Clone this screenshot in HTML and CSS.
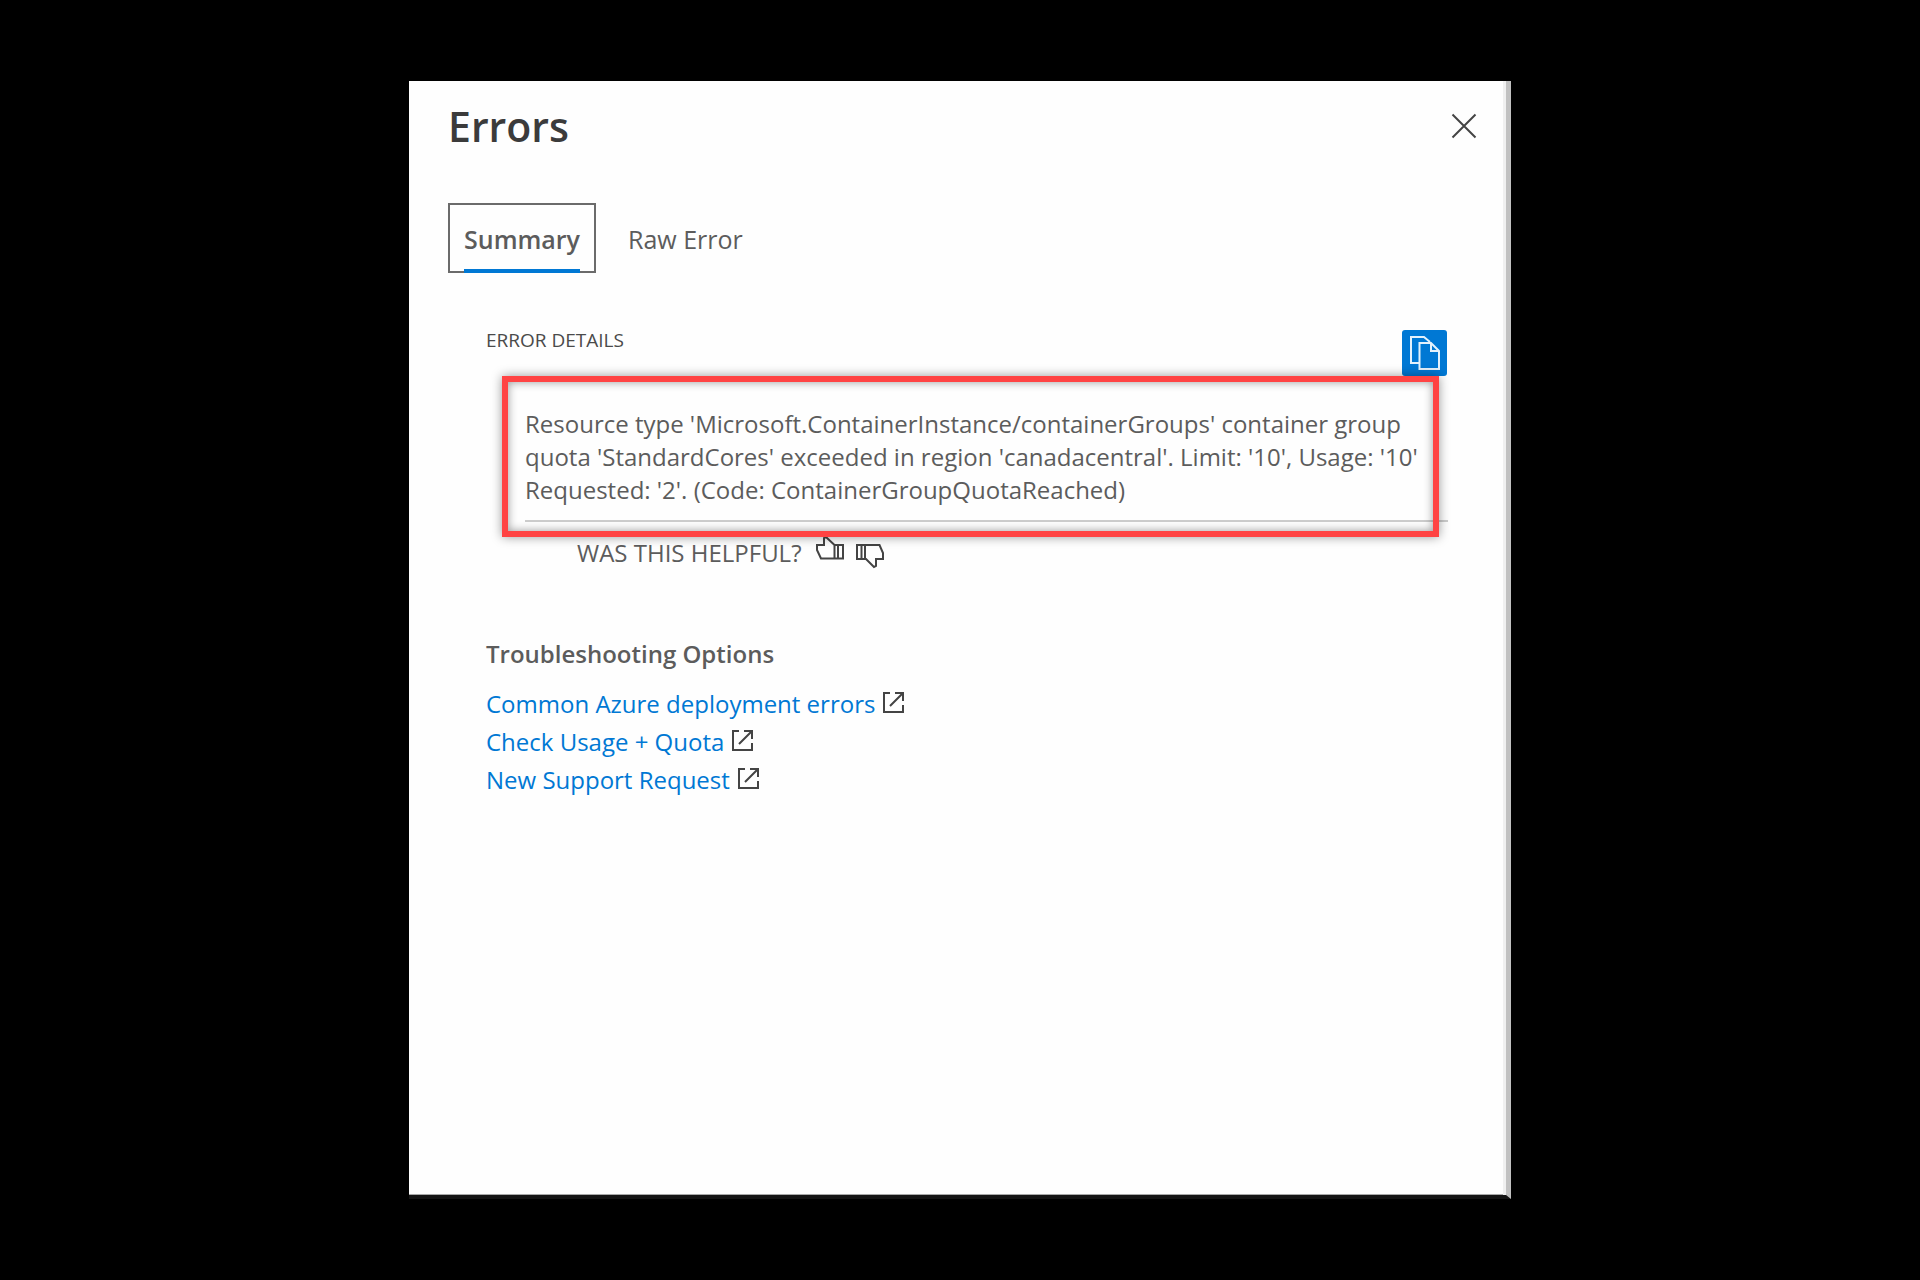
FILE: index.html
```html
<!DOCTYPE html>
<html lang="en">
  <head>
    <meta charset="UTF-8" />
    <meta name="viewport" content="width=device-width, initial-scale=1.0" />
    <title>Errors</title>
    <link rel="stylesheet" href="styles.css">
  </head>

  <body>
    <main class="panel">
      <header class="panel-header">
        <h1>Errors</h1>
        <button class="close-button" type="button" aria-label="Close">
          <svg width="26" height="26" viewBox="0 0 26 26">
            <path d="M1.500 1.500L24.500 24.500M24.500 1.500L1.500 24.500" />
          </svg>
        </button>
      </header>

      <div class="tabs" role="tablist">
        <button class="tab active" type="button" role="tab" aria-selected="true">Summary</button>
        <button class="tab" type="button" role="tab" aria-selected="false">Raw Error</button>
      </div>

      <section class="details">
        <div class="details-header">
          <h2>ERROR DETAILS</h2>
          <button class="copy-button" type="button" aria-label="Copy">
            <svg width="30" height="34" viewBox="0 0 30 34">
              <path d="M9 27H1V1H14L20 6" />
              <path d="M9.500 7H21L29 15V33H9.500Z" />
              <path d="M21 7V15H29" />
            </svg>
          </button>
        </div>

        <div class="message">
          <p>Resource type 'Microsoft.ContainerInstance/containerGroups' container group quota 'StandardCores' exceeded in region 'canadacentral'. Limit: '10', Usage: '10' Requested: '2'. (Code: ContainerGroupQuotaReached)</p>
          <div class="highlight"></div>
        </div>

        <div class="helpful">
          <span>WAS THIS HELPFUL?</span>
          <button class="thumb" type="button" aria-label="Yes">
            <svg width="28" height="33" viewBox="0 0 28 33">
              <path d="M5 22.500L1 14V9H8V2L10 1L18.500 9H27V22.500ZM18.500 9V22.500M22 9V22.500" />
            </svg>
          </button>
          <button class="thumb" type="button" aria-label="No">
            <svg width="28" height="33" viewBox="0 0 28 33">
              <path d="M1 9H23.500L27 17V23H20V30L18 31L10 23H1ZM5.500 9V23M9 9V23" />
            </svg>
          </button>
        </div>
      </section>

      <section class="troubleshooting">
        <h3>Troubleshooting Options</h3>
        <ul>
          <li>
            <a href="#">Common Azure deployment errors</a>
            <svg class="external" width="21" height="21" viewBox="0 0 21 21">
              <path d="M7 1H1V20H20V13M12 1H20V9M20 1L7 14" />
            </svg>
          </li>
          <li>
            <a href="#">Check Usage + Quota</a>
            <svg class="external" width="21" height="21" viewBox="0 0 21 21">
              <path d="M7 1H1V20H20V13M12 1H20V9M20 1L7 14" />
            </svg>
          </li>
          <li>
            <a href="#">New Support Request</a>
            <svg class="external" width="21" height="21" viewBox="0 0 21 21">
              <path d="M7 1H1V20H20V13M12 1H20V9M20 1L7 14" />
            </svg>
          </li>
        </ul>
      </section>
    </main>
  </body>
</html>
```

FILE: styles.css
```css
* {
  box-sizing: border-box;
}

body {
  margin: 0;
  min-height: 100vh;
  padding: 81px 0;
  display: flex;
  justify-content: center;
  background-color: #000000;
  font-family: "Open Sans", "Noto Sans", sans-serif;
  font-size: 24px;
  line-height: 33px;
  color: #5c5c5c;
}

h1,
h2,
h3,
p,
ul {
  margin: 0;
  padding: 0;
}

button {
  padding: 0;
  border: none;
  background: none;
  font: inherit;
  color: inherit;
  cursor: pointer;
}

svg {
  display: block;
  fill: none;
  stroke: #444444;
  stroke-width: 2;
}

.panel {
  width: 100%;
  max-width: 1102px;
  background-color: #fefefe;
  border-right: 5px solid #c1c1c1;
  border-bottom: 4px solid #141414;
  /* Light strip next to the right edge, thin line above the bottom one */
  box-shadow: inset -3px 0 0 #f0f0f0, inset 0 -1px 0 #a8a8a8;
}

.panel-header {
  display: flex;
  justify-content: space-between;
  align-items: center;
  padding: 15px 29px 0 39px;
}

h1 {
  font-size: 41px;
  line-height: 60px;
  font-weight: 600;
  color: #3b3b3b;
}

.tabs {
  display: flex;
  gap: 16px;
  margin-top: 47px;
  padding-left: 39px;
}

.tab {
  position: relative;
  padding: 18px 14px 15px;
  border: 2px solid transparent;
  font-size: 25px;
}

.tab.active {
  border-color: #6b6b6b;
  font-weight: 600;
}

.tab.active::after {
  content: "";
  position: absolute;
  left: 14px;
  right: 14px;
  bottom: -2px;
  height: 4px;
  background-color: #0078d4;
}

.details {
  margin-top: 57px;
  padding: 0 58px 0 77px;
}

.details-header {
  display: flex;
  justify-content: space-between;
  align-items: flex-start;
  padding-right: 1px;
}

h2 {
  font-size: 19px;
  line-height: 20px;
  font-weight: 400;
  color: #4a4a4a;
}

.copy-button {
  display: flex;
  justify-content: center;
  align-items: center;
  width: 45px;
  height: 46px;
  border-radius: 3px;
  background-color: #0078d4;
}

.copy-button svg {
  stroke: #e3f1fc;
}

.message {
  position: relative;
  margin-left: 39px;
  padding: 31px 30px 14px 0;
  border-bottom: 2px solid #cccccc;
}

.highlight {
  position: absolute;
  top: 0;
  left: -23px;
  right: 9px;
  bottom: -17px;
  border: 6px solid #ff4343;
  box-shadow: 0 0 10px rgba(0, 0, 0, 0.4), inset 0 0 10px rgba(0, 0, 0, 0.4);
}

.helpful {
  display: flex;
  margin: 14px 0 0 91px;
}

.thumb {
  margin-left: 12px;
}

.helpful span {
  margin-right: 2px;
}

.troubleshooting {
  margin-top: 68px;
  padding: 0 58px 0 77px;
}

h3 {
  font-size: 24px;
  font-weight: 600;
}

.troubleshooting ul {
  margin-top: 15px;
  list-style: none;
}

.troubleshooting li {
  display: flex;
  align-items: center;
  gap: 8px;
  line-height: 38px;
}

.troubleshooting a {
  color: #0078d4;
  text-decoration: none;
}

.external {
  margin-bottom: 4px;
}
```
